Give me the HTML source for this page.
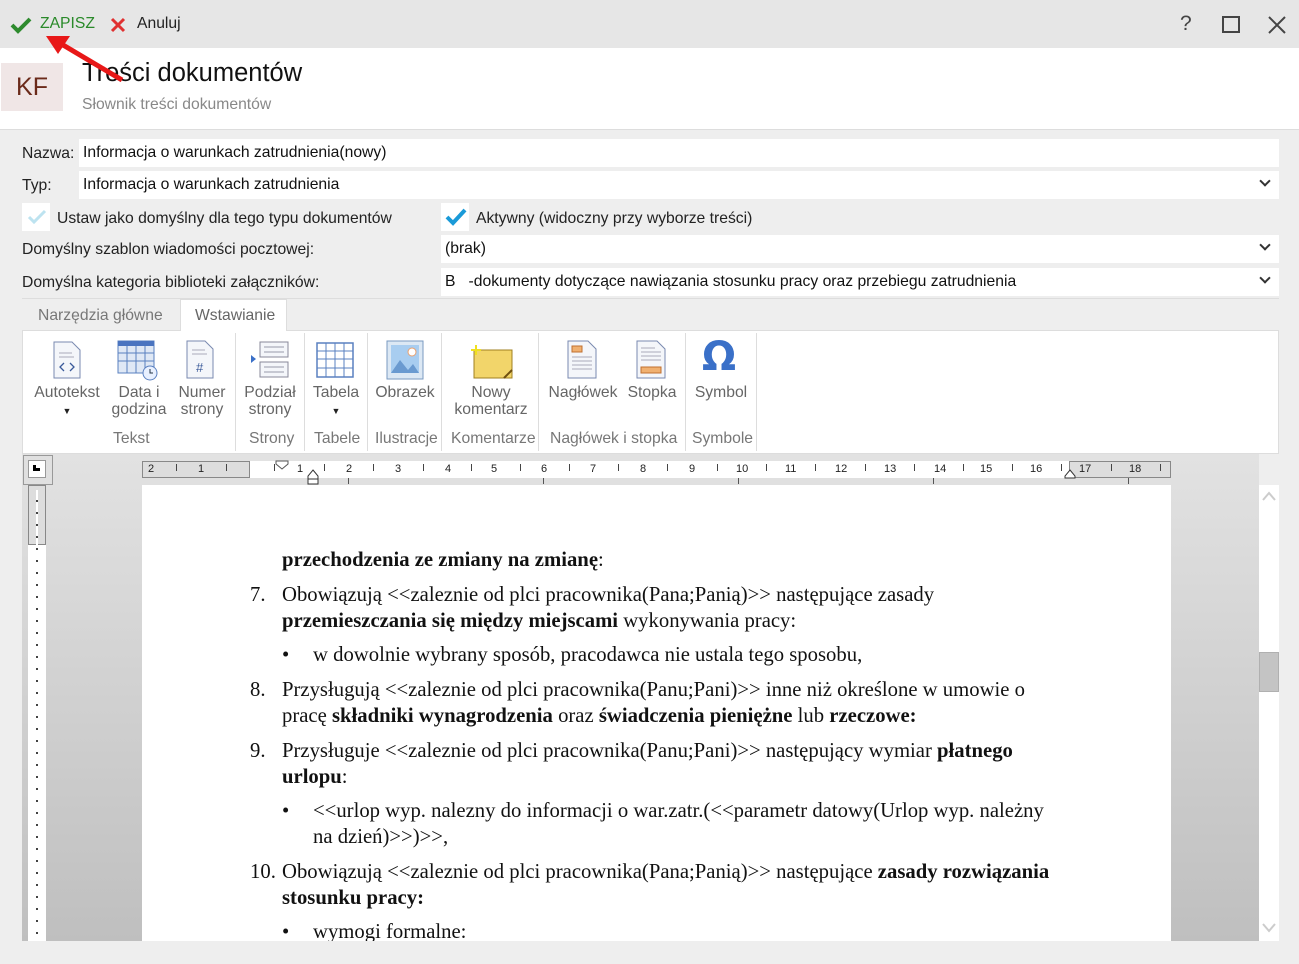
<!DOCTYPE html>
<html><head><meta charset="utf-8"><style>
*{box-sizing:border-box;margin:0;padding:0}
body{width:1299px;height:964px;overflow:hidden;background:#ececec;font-family:"Liberation Sans",sans-serif;font-size:15.7px;color:#222;position:relative}
.a{position:absolute}
.inp{position:absolute;background:#fff;height:28px;line-height:28px;padding-left:4px;font-size:15.7px;color:#111}
.lbl{position:absolute;font-size:15.7px;color:#222}
.chev{position:absolute;right:10px;top:6px;width:8px;height:8px;border-right:2px solid #333;border-bottom:2px solid #333;transform:rotate(45deg)}
.rb{position:absolute;text-align:center;font-size:15.7px;color:#666;line-height:17px}
.grp{position:absolute;top:430px;font-size:15.7px;color:#777}
.sep{position:absolute;top:333px;width:1px;height:118px;background:#ddd}
.doc{position:absolute;font-family:"Liberation Serif",serif;font-size:20.7px;color:#111;white-space:nowrap}
.rn{position:absolute;top:463px;font-size:11px;color:#222}
.rl{position:absolute;top:464px;width:1px;height:7px;background:#444}
</style></head><body>
<div class="a" style="left:0;top:0;width:1299px;height:48px;background:#e6e6e6"></div>
<svg class="a" style="left:10px;top:16px" width="22" height="18"><path d="M2 9 L8 15 L20 3" stroke="#2e8b2e" stroke-width="4" fill="none"/></svg>
<div class="a" style="left:40px;top:15px;color:#2a8a2a;font-size:15.7px">ZAPISZ</div>
<svg class="a" style="left:110px;top:17px" width="16" height="16"><path d="M2 2L14 14M14 2L2 14" stroke="#e03030" stroke-width="3"/></svg>
<div class="a" style="left:137px;top:15px;color:#222">Anuluj</div>
<div class="a" style="left:1180px;top:12px;font-size:21px;color:#444">?</div>
<div class="a" style="left:1222px;top:16px;width:18px;height:17px;border:2px solid #444"></div>
<svg class="a" style="left:1268px;top:16px" width="18" height="18"><path d="M1 1L17 17M17 1L1 17" stroke="#444" stroke-width="2"/></svg>
<div class="a" style="left:0;top:48px;width:1299px;height:82px;background:#fff;border-bottom:1px solid #ddd"></div>
<div class="a" style="left:1px;top:63px;width:62px;height:48px;background:#f0e6e6;color:#6b2a1a;font-size:25px;line-height:48px;text-align:center">KF</div>
<div class="a" style="left:82px;top:59px;font-size:25.5px;color:#111">Treści dokumentów</div>
<div class="a" style="left:82px;top:96px;font-size:15.7px;color:#888">Słownik treści dokumentów</div>
<svg class="a" style="left:40px;top:28px" width="90" height="60"><path d="M82 52 L18 14" stroke="#e81818" stroke-width="5"/><path d="M6 8 L30 8 L18 26Z" fill="#e81818"/></svg>
<div class="a" style="left:0;top:130px;width:1299px;height:834px;background:#eeeeee"></div>
<div class="lbl" style="left:22px;top:145px">Nazwa:</div>
<div class="inp" style="left:79px;top:139px;width:1200px">Informacja o warunkach zatrudnienia(nowy)</div>
<div class="lbl" style="left:22px;top:177px">Typ:</div>
<div class="inp" style="left:79px;top:171px;width:1200px">Informacja o warunkach zatrudnienia<span class="chev"></span></div>
<div class="a" style="left:22px;top:203px;width:28px;height:28px;background:#fff"></div>
<svg class="a" style="left:27px;top:208px" width="20" height="18"><path d="M2 9L7 14L18 3" stroke="#bde3f0" stroke-width="3" fill="none"/></svg>
<div class="lbl" style="left:57px;top:210px">Ustaw jako domyślny dla tego typu dokumentów</div>
<div class="a" style="left:441px;top:203px;width:28px;height:28px;background:#fff"></div>
<svg class="a" style="left:445px;top:207px" width="22" height="20"><path d="M2 10L8 16L20 3" stroke="#1a9ad8" stroke-width="4" fill="none"/></svg>
<div class="lbl" style="left:476px;top:210px">Aktywny (widoczny przy wyborze treści)</div>
<div class="lbl" style="left:22px;top:241px">Domyślny szablon wiadomości pocztowej:</div>
<div class="inp" style="left:441px;top:235px;width:838px">(brak)<span class="chev"></span></div>
<div class="lbl" style="left:22px;top:274px">Domyślna kategoria biblioteki załączników:</div>
<div class="inp" style="left:441px;top:268px;width:838px">B &nbsp;&nbsp;-dokumenty dotyczące nawiązania stosunku pracy oraz przebiegu zatrudnienia<span class="chev"></span></div>
<div class="a" style="left:22px;top:298px;width:1257px;height:1px;background:#ddd"></div>
<div class="a" style="left:38px;top:307px;color:#777">Narzędzia główne</div>
<div class="a" style="left:180px;top:299px;width:107px;height:32px;background:#fff;border:1px solid #ddd;border-bottom:none;z-index:2"></div>
<div class="a" style="left:195px;top:307px;color:#666;z-index:3">Wstawianie</div>
<div class="a" style="left:22px;top:330px;width:1257px;height:124px;background:#fff;border:1px solid #ddd"></div>
<svg class="a" style="left:52px;top:341px" width="30" height="38"><path d="M2 1H20L28 9V37H2Z" fill="#f4f6fa" stroke="#7a8ab0"/><path d="M7 12H20M7 16H22" stroke="#aab"/><path d="M12 22L8 26L12 30M18 22L22 26L18 30" stroke="#3a5a9a" fill="none" stroke-width="1.3"/></svg>
<div class="rb" style="left:30px;top:384px;width:74px">Autotekst<br><span style="font-size:9px;color:#222">▼</span></div>
<svg class="a" style="left:117px;top:340px" width="42" height="42"><rect x="1" y="1" width="36" height="32" fill="#dfe8f5" stroke="#5a80c0"/><rect x="1" y="1" width="36" height="5" fill="#4a74c0"/><path d="M1 13H37M1 21H37M10 6V33M19 6V33M28 6V33" stroke="#5a80c0"/><circle cx="33" cy="33" r="7" fill="#e8f0ff" stroke="#5a80c0"/><path d="M33 29V33H36" stroke="#234" fill="none"/></svg>
<div class="rb" style="left:105px;top:384px;width:68px">Data i<br>godzina</div>
<svg class="a" style="left:185px;top:340px" width="30" height="40"><path d="M2 1H20L28 9V38H2Z" fill="#f4f6fa" stroke="#7a8ab0"/><path d="M7 10H20M7 14H22" stroke="#aab"/><text x="11" y="32" font-size="13" fill="#3a5a9a" font-family="Liberation Sans">#</text></svg>
<div class="rb" style="left:170px;top:384px;width:64px">Numer<br>strony</div>
<svg class="a" style="left:250px;top:340px" width="40" height="40"><rect x="10" y="2" width="28" height="15" fill="#f4f6fa" stroke="#889"/><rect x="10" y="22" width="28" height="15" fill="#f4f6fa" stroke="#889"/><path d="M14 7H34M14 12H34M14 27H34M14 32H34" stroke="#99a"/><path d="M1 15L6 19L1 23Z" fill="#3a70c8"/></svg>
<div class="rb" style="left:236px;top:384px;width:68px">Podział<br>strony</div>
<svg class="a" style="left:316px;top:342px" width="38" height="36"><rect x="1" y="1" width="36" height="34" fill="#fff" stroke="#5a80c0" stroke-width="1.5"/><path d="M1 9H37M1 17H37M1 26H37M10 1V35M19 1V35M28 1V35" stroke="#5a80c0"/></svg>
<div class="rb" style="left:304px;top:384px;width:64px">Tabela<br><span style="font-size:9px;color:#222">▼</span></div>
<svg class="a" style="left:386px;top:340px" width="38" height="40"><rect x="1" y="1" width="36" height="38" fill="#dce8f4" stroke="#7a9ac0"/><rect x="5" y="5" width="28" height="28" fill="#a8cdf0"/><circle cx="26" cy="12" r="4" fill="#fff" stroke="#e8a070"/><path d="M5 33L14 20L22 30L27 24L33 33Z" fill="#6a9ad0"/></svg>
<div class="rb" style="left:368px;top:384px;width:74px">Obrazek</div>
<svg class="a" style="left:470px;top:344px" width="44" height="36"><rect x="4" y="6" width="38" height="28" fill="#f2d56a" stroke="#a08020"/><path d="M34 34L42 26" stroke="#705010" stroke-width="2"/><path d="M6 1V11M1 6H11" stroke="#f0e020" stroke-width="2"/></svg>
<div class="rb" style="left:446px;top:384px;width:90px">Nowy<br>komentarz</div>
<svg class="a" style="left:566px;top:340px" width="32" height="40"><path d="M2 1H22L30 9V38H2Z" fill="#f4f6fa" stroke="#7a8ab0"/><rect x="6" y="6" width="10" height="6" fill="#f0b070" stroke="#c07030"/><path d="M6 17H26M6 21H26M6 25H26M6 29H26" stroke="#aab"/></svg>
<div class="rb" style="left:543px;top:384px;width:80px">Nagłówek</div>
<svg class="a" style="left:635px;top:340px" width="32" height="40"><path d="M2 1H22L30 9V38H2Z" fill="#f4f6fa" stroke="#7a8ab0"/><path d="M6 8H20M6 12H26M6 16H26M6 20H26" stroke="#aab"/><rect x="6" y="27" width="20" height="6" fill="#f0b070" stroke="#c07030"/></svg>
<div class="rb" style="left:622px;top:384px;width:60px">Stopka</div>
<div class="a" style="left:702px;top:334px;font-size:40px;color:#3a70c8;font-weight:bold;font-family:'DejaVu Sans',sans-serif">Ω</div>
<div class="rb" style="left:688px;top:384px;width:66px">Symbol</div>
<div class="grp" style="left:113px">Tekst</div>
<div class="grp" style="left:249px">Strony</div>
<div class="grp" style="left:314px">Tabele</div>
<div class="grp" style="left:375px">Ilustracje</div>
<div class="grp" style="left:451px">Komentarze</div>
<div class="grp" style="left:550px">Nagłówek i stopka</div>
<div class="grp" style="left:692px">Symbole</div>
<div class="sep" style="left:235px"></div><div class="sep" style="left:304px"></div><div class="sep" style="left:367px"></div><div class="sep" style="left:441px"></div><div class="sep" style="left:538px"></div><div class="sep" style="left:685px"></div><div class="sep" style="left:756px"></div>
<div class="a" style="left:22px;top:454px;width:1237px;height:487px;background:linear-gradient(#e2e2e2,#bfbfbf)"></div>
<div class="a" style="left:1259px;top:485px;width:20px;height:456px;background:#fff"></div>
<svg class="a" style="left:1261px;top:490px" width="16" height="12"><path d="M2 10L8 3L14 10" stroke="#ccc" stroke-width="2" fill="none"/></svg>
<svg class="a" style="left:1261px;top:922px" width="16" height="12"><path d="M2 2L8 9L14 2" stroke="#ccc" stroke-width="2" fill="none"/></svg>
<div class="a" style="left:1259px;top:652px;width:20px;height:40px;background:#c4c4c4;border:1px solid #b0b0b0"></div>
<div class="a" style="left:23px;top:455px;width:30px;height:30px;border:1px solid #999;background:#e0e0e0"></div>
<div class="a" style="left:28px;top:460px;width:18px;height:18px;background:#fff;border:1px solid #999"></div>
<div class="a" style="left:33px;top:465px;width:7px;height:6px;border-left:3px solid #000;border-bottom:3px solid #000"></div>
<div class="a" style="left:142px;top:461px;width:1029px;height:17px;background:#fff"></div>
<div class="a" style="left:142px;top:461px;width:108px;height:17px;background:#ddd;border:1px solid #888"></div>
<div class="a" style="left:1069px;top:461px;width:102px;height:17px;background:#ddd;border:1px solid #888"></div>
<div class="rn" style="left:148px">2</div><div class="rn" style="left:198px">1</div><div class="rn" style="left:297px">1</div>
<div class="rn" style="left:346px">2</div><div class="rn" style="left:395px">3</div><div class="rn" style="left:445px">4</div><div class="rn" style="left:491px">5</div><div class="rn" style="left:541px">6</div><div class="rn" style="left:590px">7</div><div class="rn" style="left:640px">8</div><div class="rn" style="left:689px">9</div><div class="rn" style="left:736px">10</div><div class="rn" style="left:785px">11</div><div class="rn" style="left:835px">12</div><div class="rn" style="left:884px">13</div><div class="rn" style="left:934px">14</div><div class="rn" style="left:980px">15</div><div class="rn" style="left:1030px">16</div><div class="rn" style="left:1079px">17</div><div class="rn" style="left:1129px">18</div>
<div class="rl" style="left:176px"></div><div class="rl" style="left:226px"></div><div class="rl" style="left:274px"></div><div class="rl" style="left:324px"></div><div class="rl" style="left:373px"></div><div class="rl" style="left:423px"></div><div class="rl" style="left:471px"></div><div class="rl" style="left:520px"></div><div class="rl" style="left:569px"></div><div class="rl" style="left:618px"></div><div class="rl" style="left:667px"></div><div class="rl" style="left:717px"></div><div class="rl" style="left:766px"></div><div class="rl" style="left:815px"></div><div class="rl" style="left:865px"></div><div class="rl" style="left:914px"></div><div class="rl" style="left:963px"></div><div class="rl" style="left:1012px"></div><div class="rl" style="left:1061px"></div><div class="rl" style="left:1111px"></div><div class="rl" style="left:1160px"></div>
<div class="a" style="left:348px;top:478px;width:1px;height:6px;background:#555"></div><div class="a" style="left:543px;top:478px;width:1px;height:6px;background:#555"></div><div class="a" style="left:738px;top:478px;width:1px;height:6px;background:#555"></div><div class="a" style="left:933px;top:478px;width:1px;height:6px;background:#555"></div><div class="a" style="left:1128px;top:478px;width:1px;height:6px;background:#555"></div>
<svg class="a" style="left:275px;top:460px" width="14" height="10"><path d="M1 1H13V4L7 9L1 4Z" fill="#fff" stroke="#555"/></svg>
<svg class="a" style="left:307px;top:469px" width="12" height="16"><path d="M6 1L11 7V15H1V7Z" fill="#fff" stroke="#333"/><path d="M1 10H11" stroke="#333"/></svg>
<svg class="a" style="left:1064px;top:469px" width="12" height="10"><path d="M6 1L11 7V9H1V7Z" fill="#fff" stroke="#333"/></svg>
<div class="a" style="left:28px;top:485px;width:18px;height:456px;background:#fff"></div>
<div class="a" style="left:28px;top:485px;width:18px;height:60px;background:#ddd;border:1px solid #888"></div>
<div class="a" style="left:36px;top:490px;width:2px;height:450px;background:repeating-linear-gradient(#fff 0 10px,#444 10px 12px)"></div>
<div class="a" style="left:142px;top:485px;width:1029px;height:456px;background:#fff;overflow:hidden">
<div class="doc" style="left:140px;top:64px"><b>przechodzenia ze zmiany na zmianę</b>:</div>
<div class="doc" style="left:108px;top:99px">7.</div>
<div class="doc" style="left:140px;top:99px">Obowiązują &lt;&lt;zaleznie od plci pracownika(Pana;Panią)&gt;&gt; następujące zasady</div>
<div class="doc" style="left:140px;top:125px"><b>przemieszczania się między miejscami</b> wykonywania pracy:</div>
<div class="doc" style="left:140px;top:159px">•</div>
<div class="doc" style="left:171px;top:159px">w dowolnie wybrany sposób, pracodawca nie ustala tego sposobu,</div>
<div class="doc" style="left:108px;top:194px">8.</div>
<div class="doc" style="left:140px;top:194px">Przysługują &lt;&lt;zaleznie od plci pracownika(Panu;Pani)&gt;&gt; inne niż określone w umowie o</div>
<div class="doc" style="left:140px;top:220px">pracę <b>składniki wynagrodzenia</b> oraz <b>świadczenia pieniężne</b> lub <b>rzeczowe:</b></div>
<div class="doc" style="left:108px;top:255px">9.</div>
<div class="doc" style="left:140px;top:255px">Przysługuje &lt;&lt;zaleznie od plci pracownika(Panu;Pani)&gt;&gt; następujący wymiar <b>płatnego</b></div>
<div class="doc" style="left:140px;top:281px"><b>urlopu</b>:</div>
<div class="doc" style="left:140px;top:315px">•</div>
<div class="doc" style="left:171px;top:315px">&lt;&lt;urlop wyp. nalezny do informacji o war.zatr.(&lt;&lt;parametr datowy(Urlop wyp. należny</div>
<div class="doc" style="left:171px;top:341px">na dzień)&gt;&gt;)&gt;&gt;,</div>
<div class="doc" style="left:108px;top:376px">10.</div>
<div class="doc" style="left:140px;top:376px">Obowiązują &lt;&lt;zaleznie od plci pracownika(Pana;Panią)&gt;&gt; następujące <b>zasady rozwiązania</b></div>
<div class="doc" style="left:140px;top:402px"><b>stosunku pracy:</b></div>
<div class="doc" style="left:140px;top:436px">•</div>
<div class="doc" style="left:171px;top:436px">wymogi formalne:</div>
</div>
</body></html>
